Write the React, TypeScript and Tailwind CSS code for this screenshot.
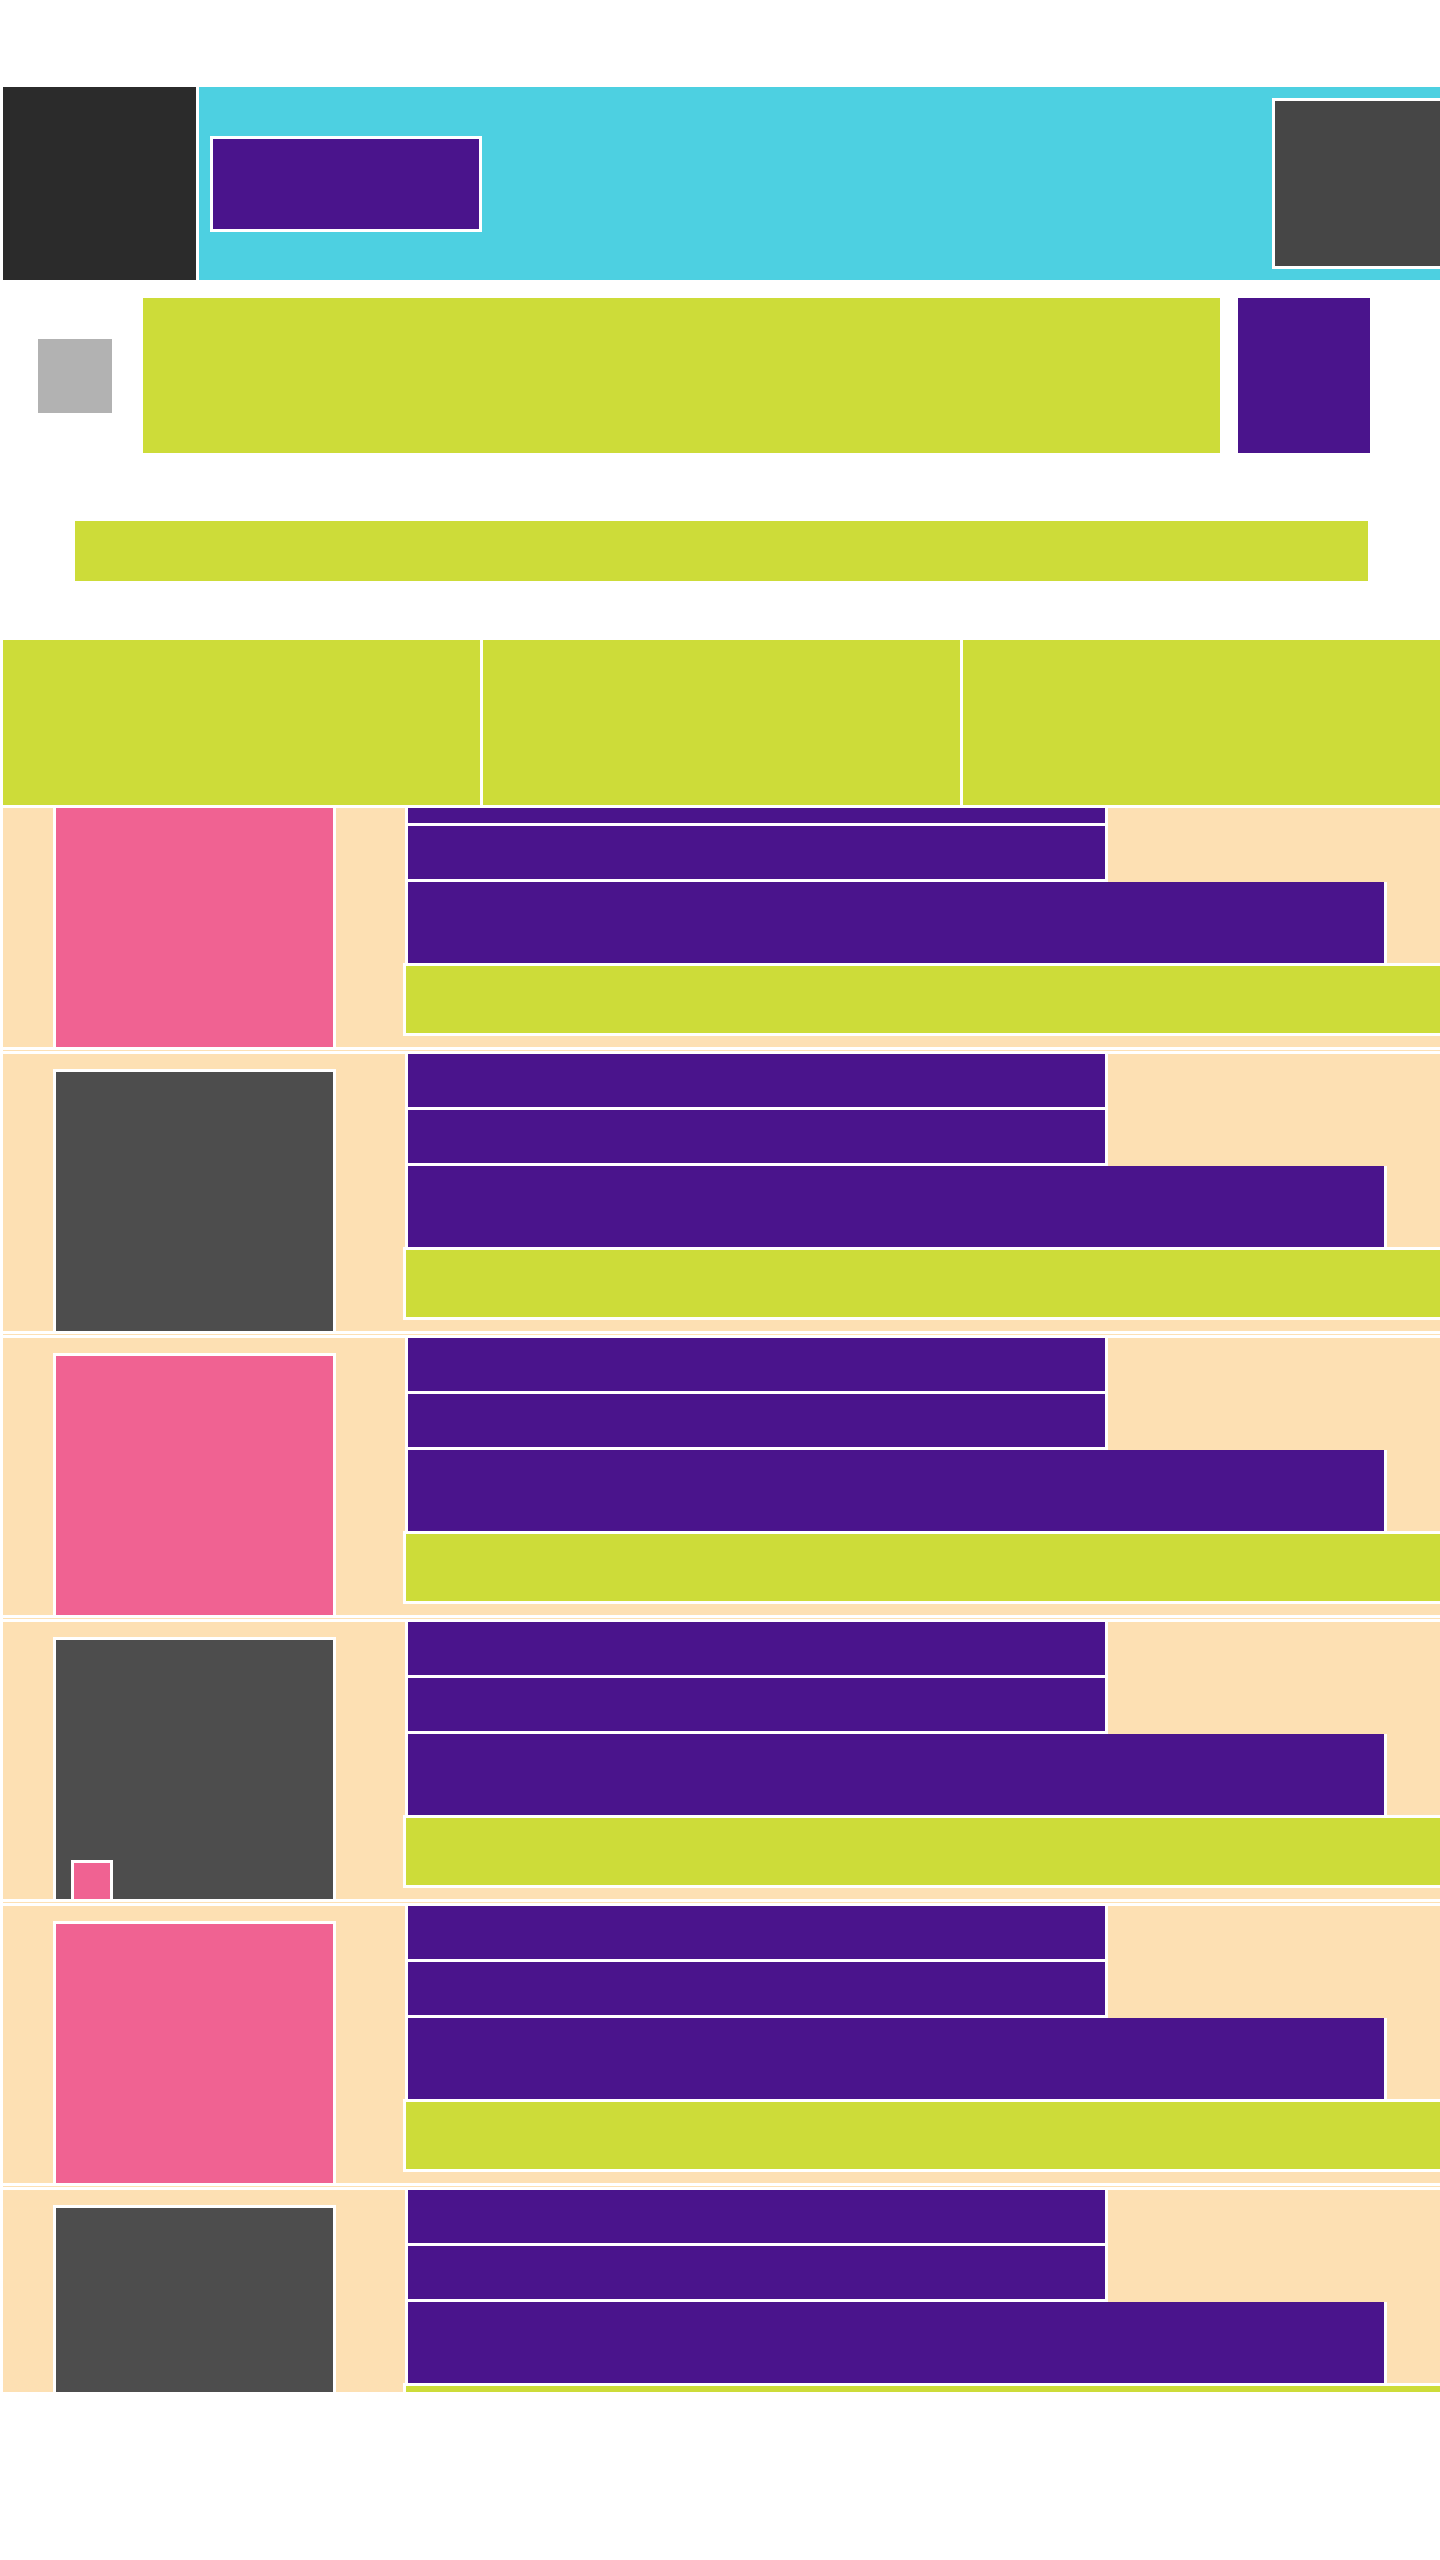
const cards = [
  { tone: 'pink', badge: false },
  { tone: 'dark', badge: false },
  { tone: 'pink', badge: false },
  { tone: 'dark', badge: true },
  { tone: 'pink', badge: false },
  { tone: 'dark', badge: false },
];

function ListCard({ tone, badge }: { tone: string; badge: boolean }) {
  return (
    <div>
      <div className="ml-[3px] flex h-[277px] overflow-hidden bg-[#fde0b3]">
        {/* thumbnail */}
        <div className="w-[402px] shrink-0 pl-[50px] pt-[15px]">
          <div
            className={
              tone === 'pink'
                ? 'relative h-[283px] w-[283px] border-[3px] border-white bg-[#f06292]'
                : 'relative h-[283px] w-[283px] border-[3px] border-white bg-[#4d4d4d]'
            }
          >
            {badge && (
              <div className="absolute left-[15px] top-[220px] h-[42px] w-[42px] border-[3px] border-white bg-[#f06292]"></div>
            )}
          </div>
        </div>

        {/* text lines */}
        <div className="flex min-w-0 flex-1 flex-col">
          <div className="h-[56px] w-[703px] border-x-[3px] border-b-[3px] border-white bg-[#4a148c]"></div>
          <div className="h-[56px] w-[703px] border-x-[3px] border-b-[3px] border-white bg-[#4a148c]"></div>
          <div className="h-[81px] w-[982px] border-x-[3px] border-white bg-[#4a148c]"></div>
          <div className="-ml-[2px] h-[73px] border-y-[3px] border-l-[3px] border-white bg-[#cddc39]"></div>
        </div>
      </div>
      <div className="py-[3px]">
        <div className="ml-[3px] h-px bg-[#fde0b3]"></div>
      </div>
    </div>
  );
}

export default function App() {
  return (
    <div className="min-h-[2560px] w-[1440px] overflow-hidden bg-white pt-[87px]">
      {/* top bar */}
      <header className="flex h-[193px] gap-[3px] pl-[3px]">
        <div className="w-[193px] shrink-0 bg-[#2b2b2b]"></div>
        <div className="flex flex-1 items-center overflow-hidden bg-[#4dd0e1] pl-[11px]">
          <div className="h-[96px] w-[272px] shrink-0 border-[3px] border-white bg-[#4a148c]"></div>
          <div className="ml-[790px] h-[171px] w-[200px] shrink-0 border-[3px] border-white bg-[#464646]"></div>
        </div>
      </header>

      {/* search row */}
      <section className="mt-[18px] flex h-[155px] items-center">
        <div className="ml-[38px] h-[74px] w-[74px] shrink-0 bg-[#b2b2b2]"></div>
        <div className="ml-[31px] h-full w-[1077px] shrink-0 bg-[#cddc39]"></div>
        <div className="ml-[18px] h-full w-[132px] shrink-0 bg-[#4a148c]"></div>
      </section>

      <div className="ml-[75px] mt-[68px] h-[60px] w-[1293px] bg-[#cddc39]"></div>

      {/* tabs */}
      <div className="mt-[59px] grid h-[165px] grid-cols-3 gap-[3px] pl-[3px]">
        <div className="bg-[#cddc39]"></div>
        <div className="bg-[#cddc39]"></div>
        <div className="bg-[#cddc39]"></div>
      </div>

      {/* scrolled list */}
      <div className="mt-[3px] h-[1584px] overflow-hidden">
        <div className="-mt-[38px] flex flex-col">
          {cards.map((c, i) => (
            <ListCard key={i} tone={c.tone} badge={c.badge} />
          ))}
        </div>
      </div>
    </div>
  );
}
